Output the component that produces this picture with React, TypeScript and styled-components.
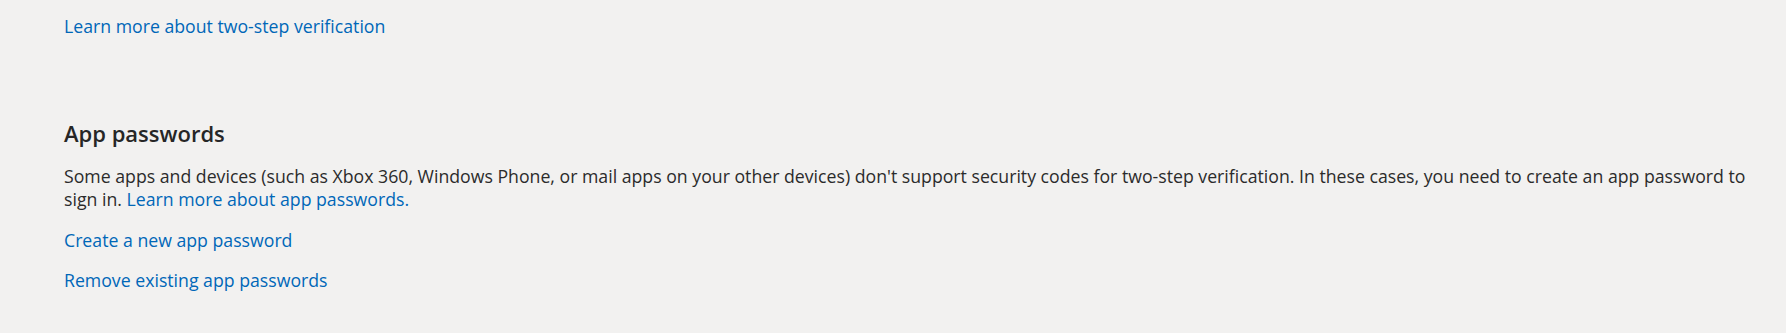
import React from "react";
import styled, { createGlobalStyle } from "styled-components";

const GlobalStyle = createGlobalStyle`
  html, body {
    margin: 0;
    padding: 0;
    background: #f2f1f0;
  }
  body {
    font-family: "Segoe UI", "Open Sans", "Noto Sans", sans-serif;
    color: #2b2b2b;
  }
`;

const Page = styled.main`
  box-sizing: border-box;
  width: 1786px;
  height: 333px;
  padding: 15px 10px 0 64px;
  background: #f2f1f0;
  display: flex;
  flex-direction: column;
`;

const Link = styled.a`
  color: #0067b8;
  text-decoration: none;
  cursor: pointer;
`;

const BlockLink = styled(Link)<{ $gap?: number }>`
  display: block;
  font-size: 17.7px;
  line-height: 22.5px;
  margin-top: ${(p) => p.$gap ?? 0}px;
`;

const Section = styled.section`
  margin-top: 81.5px;
  display: flex;
  flex-direction: column;
`;

const Heading = styled.h2`
  margin: 0;
  font-size: 22px;
  font-weight: 600;
  line-height: 28px;
  color: #262626;
`;

const Paragraph = styled.p`
  margin: 18px 0 0;
  font-size: 17.7px;
  line-height: 22.5px;
  color: #2b2b2b;
`;

export default function App() {
  return (
    <>
      <GlobalStyle />
      <Page>
        <BlockLink>Learn more about two-step verification</BlockLink>
        <Section>
          <Heading>App passwords</Heading>
          <Paragraph>
            Some apps and devices (such as Xbox 360, Windows Phone, or mail apps on your other
            devices) don't support security codes for two-step verification. In these cases, you
            need to create an app password to sign in.{" "}
            <Link>Learn more about app passwords.</Link>
          </Paragraph>
          <BlockLink $gap={18.5}>Create a new app password</BlockLink>
          <BlockLink $gap={17.8}>Remove existing app passwords</BlockLink>
        </Section>
      </Page>
    </>
  );
}
